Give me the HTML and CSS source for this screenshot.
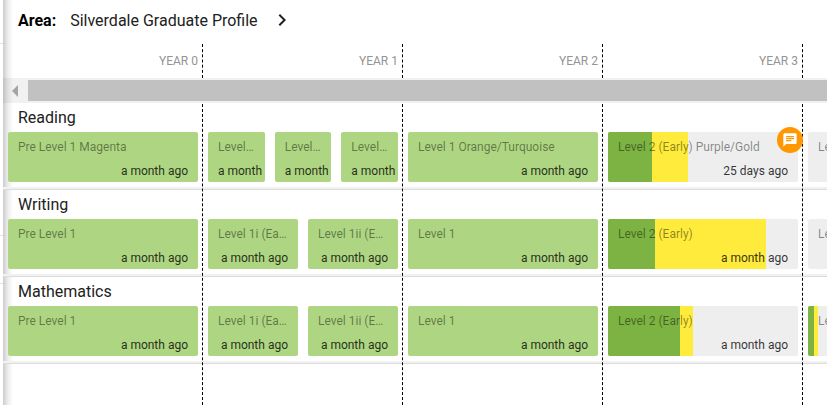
FILE: index.html
```
<!DOCTYPE html>
<html lang="en">
<head>
  <meta charset="UTF-8">
  <meta name="viewport" content="width=device-width, initial-scale=1.0">
  <title>Graduate Profile</title>
  <link rel="stylesheet" href="styles.css">
</head>
<body>

<aside class="side">
  <div class="side-top"></div>
  <div class="side-list"></div>
  <div class="side-item"></div>
</aside>

<main class="timeline">
  <header class="area">
    <b>Area:</b>
    <span class="area-name">Silverdale Graduate Profile</span>
    <button class="area-next" aria-label="Next area">
      <svg width="24" height="24" viewBox="0 0 24 24"><path d="M10 6 8.59 7.41 13.17 12l-4.58 4.59L10 18l6-6z"/></svg>
    </button>
  </header>

  <div class="years">
    <div class="year">YEAR 0</div>
    <div class="year">YEAR 1</div>
    <div class="year">YEAR 2</div>
    <div class="year">YEAR 3</div>
  </div>

  <div class="scrollbar">
    <button class="scroll-left" aria-label="Scroll left">
      <svg width="6" height="12" viewBox="0 0 6 12"><path d="M6 0v12L0 6z"/></svg>
    </button>
    <div class="thumb"></div>
  </div>

  <div class="subjects">
    <!-- Year lines -->
    <div class="lines">
      <div></div>
      <div></div>
      <div></div>
      <div></div>
    </div>

    <section class="subject">
      <h2>Reading</h2>
      <div class="row">
        <div class="cell">
          <div class="level done"><p class="name">Pre Level 1 Magenta</p><p class="time">a month ago</p></div>
        </div>
        <div class="cell">
          <div class="level done"><p class="name">Level 1 Red</p><p class="time">a month ago</p></div>
          <div class="level done"><p class="name">Level 1 Yellow</p><p class="time">a month ago</p></div>
          <div class="level done"><p class="name">Level 1 Blue</p><p class="time">a month ago</p></div>
        </div>
        <div class="cell">
          <div class="level done"><p class="name">Level 1 Orange/Turquoise</p><p class="time">a month ago</p></div>
        </div>
        <div class="cell">
          <div class="level">
            <div class="bar expected" style="width: 42%"></div>
            <div class="bar achieved" style="width: 23%"></div>
            <p class="name">Level 2 (Early) Purple/Gold</p>
            <p class="time">25 days ago</p>
          </div>
          <button class="comment" aria-label="Comments">
            <svg width="16" height="16" viewBox="0 0 24 24"><path d="M20 2H4c-1.100 0-1.990.9-1.990 2L2 22l4-4h14c1.100 0 2-.9 2-2V4c0-1.100-.9-2-2-2zM6 9h12v2H6V9zm8 5H6v-2h8v2zm4-6H6V6h12v2z"/></svg>
          </button>
        </div>
        <div class="cell">
          <div class="level"><p class="name">Level 2</p></div>
        </div>
      </div>
    </section>

    <section class="subject">
      <h2>Writing</h2>
      <div class="row">
        <div class="cell">
          <div class="level done"><p class="name">Pre Level 1</p><p class="time">a month ago</p></div>
        </div>
        <div class="cell">
          <div class="level done"><p class="name">Level 1i (Early)</p><p class="time">a month ago</p></div>
          <div class="level done"><p class="name">Level 1ii (Early)</p><p class="time">a month ago</p></div>
        </div>
        <div class="cell">
          <div class="level done"><p class="name">Level 1</p><p class="time">a month ago</p></div>
        </div>
        <div class="cell">
          <div class="level">
            <div class="bar expected" style="width: 83%"></div>
            <div class="bar achieved" style="width: 24.700%"></div>
            <p class="name">Level 2 (Early)</p>
            <p class="time">a month ago</p>
          </div>
        </div>
        <div class="cell">
          <div class="level"><p class="name">Level 2</p></div>
        </div>
      </div>
    </section>

    <section class="subject">
      <h2>Mathematics</h2>
      <div class="row">
        <div class="cell">
          <div class="level done"><p class="name">Pre Level 1</p><p class="time">a month ago</p></div>
        </div>
        <div class="cell">
          <div class="level done"><p class="name">Level 1i (Early)</p><p class="time">a month ago</p></div>
          <div class="level done"><p class="name">Level 1ii (Early)</p><p class="time">a month ago</p></div>
        </div>
        <div class="cell">
          <div class="level done"><p class="name">Level 1</p><p class="time">a month ago</p></div>
        </div>
        <div class="cell">
          <div class="level">
            <div class="bar expected" style="width: 44.700%"></div>
            <div class="bar achieved" style="width: 38%"></div>
            <p class="name">Level 2 (Early)</p>
            <p class="time">a month ago</p>
          </div>
        </div>
        <div class="cell">
          <div class="level">
            <div class="bar expected" style="width: 5%"></div>
            <div class="bar achieved" style="width: 3%"></div>
            <p class="name">Level 2</p>
          </div>
        </div>
      </div>
    </section>
  </div>
</main>

</body>
</html>
```
FILE: styles.css
```
/* Reset */
* {
  margin: 0;
  padding: 0;
  box-sizing: border-box;
}

body {
  display: flex;
  min-height: 100vh;
  font-family: Roboto, sans-serif;
  font-size: 12px;
  color: #212121;
  background-color: #fff;
}

button {
  display: flex;
  align-items: center;
  justify-content: center;
  border: none;
  background: none;
  cursor: pointer;
}

/* Edge of the side panel */
.side {
  flex: none;
  width: 3px;
}

.side div {
  border-bottom: 1px solid #e0e0e0;
}

.side-top {
  height: 44px;
}

.side-list {
  height: 192px;
}

.side-item {
  height: 48px;
}

.timeline {
  position: relative;
  flex: 1;
  min-width: 0;
  display: flex;
  flex-direction: column;
  overflow: hidden;
}

/* Shadow of the side panel */
.timeline::before {
  content: "";
  position: absolute;
  top: 0;
  bottom: 0;
  left: 0;
  width: 10px;
  background: linear-gradient(to right, rgba(0, 0, 0, 0.2), rgba(0, 0, 0, 0.07) 50%, rgba(0, 0, 0, 0));
}

/* Area */
.area {
  display: flex;
  align-items: center;
  height: 44px;
  padding: 0 15px 4px;
  font-size: 16px;
}

.area b {
  color: #000;
}

.area-name {
  margin: 0 12px 0 14px;
}

.area-next {
  width: 24px;
  height: 24px;
  fill: #212121;
}

/* Years */
.years {
  display: flex;
  height: 34px;
}

.year {
  flex: none;
  width: 200px;
  padding-right: 4px;
  border-right: 1px dashed #000;
  line-height: 34px;
  text-align: right;
  color: #949494;
}

/* Scrollbar */
.scrollbar {
  display: flex;
  height: 25px;
  padding: 2px 0;
  background-color: #f1f1f1;
}

.scroll-left {
  width: 25px;
  padding-right: 2px;
  fill: #a3a3a3;
}

.thumb {
  flex: 1;
  background-color: #c1c1c1;
}

/* Subjects */
.subjects {
  position: relative;
  flex: 1;
}

.lines {
  position: absolute;
  top: 1px;
  bottom: 0;
  left: 0;
  display: flex;
}

.lines div {
  width: 200px;
  border-right: 1px dashed #000;
}

.subject {
  height: 87px;
  border-bottom: 1px solid #dcdcdc;
  box-shadow: inset 0 -2px #f1f1f1;
}

.subject h2 {
  height: 29px;
  padding-left: 15px;
  font-size: 16px;
  font-weight: 400;
  line-height: 29px;
}

.row {
  display: flex;
}

.cell {
  position: relative;
  flex: none;
  display: flex;
  gap: 10px;
  width: 200px;
  padding: 0 5px;
}

/* Levels */
.level {
  position: relative;
  flex: 1;
  min-width: 0;
  height: 50px;
  padding: 3px 10px;
  border-radius: 2px;
  background-color: #eee;
  white-space: nowrap;
  overflow: hidden;
}

.level.done {
  background-color: #aed581;
}

.bar {
  position: absolute;
  top: 0;
  bottom: 0;
  left: 0;
}

.expected {
  background-color: #ffeb3b;
}

.achieved {
  background-color: #7cb342;
}

.name,
.time {
  position: relative;
  line-height: 24px;
}

.name {
  color: rgba(0, 0, 0, 0.45);
  overflow: hidden;
  text-overflow: ellipsis;
}

.time {
  text-align: right;
  color: rgba(0, 0, 0, 0.8);
}

.comment {
  position: absolute;
  z-index: 2;
  top: -5px;
  right: 0;
  width: 26px;
  height: 26px;
  border-radius: 50%;
  background-color: #ff9800;
  fill: #fff;
}
```
